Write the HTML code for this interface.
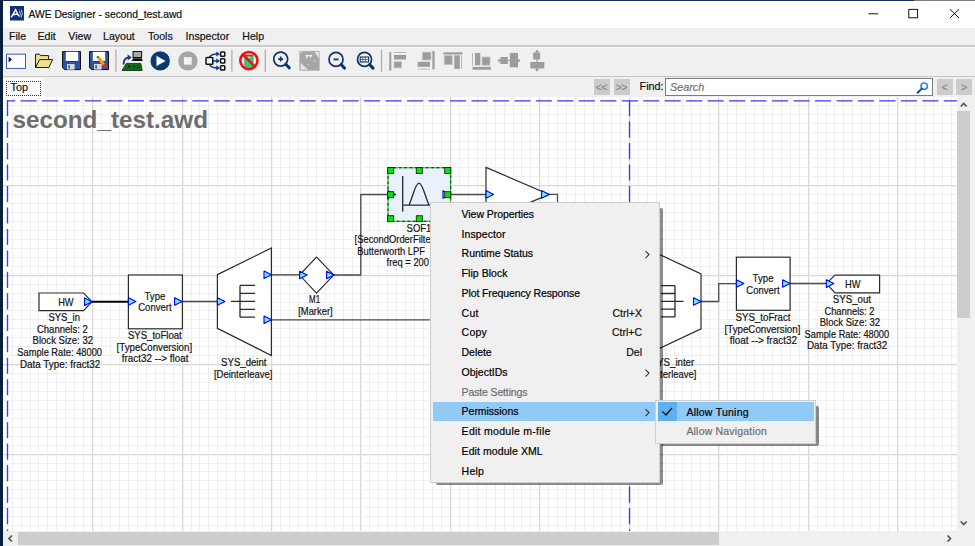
<!DOCTYPE html>
<html><head><meta charset="utf-8">
<style>
*{margin:0;padding:0;box-sizing:border-box}
html,body{width:975px;height:546px;overflow:hidden;background:#f0f0f0;font-family:"Liberation Sans", sans-serif;color:#000}
.abs{position:absolute}
.t{position:absolute;white-space:nowrap;line-height:1;-webkit-text-stroke:0.2px currentColor}
svg{position:absolute;left:0;top:0}
</style></head><body>

<div class="abs" style="left:0;top:0;width:975px;height:28px;background:#fff"></div>
<div class="abs" style="left:0;top:0;width:914px;height:1px;background:#1a3050"></div>
<div class="abs" style="left:914px;top:0;width:61px;height:1px;background:#7a7a7a"></div>
<svg width="975" height="30" style="left:0;top:0">
<rect x="10" y="6" width="14" height="14.5" fill="#10307a"/>
<path d="M11.2 17.4L15.6 9.8L18.8 16.2M12.8 14.8L17.6 14" stroke="#fff" stroke-width="1.4" fill="none"/>
<path d="M19.4 10.6Q21.4 13.6 19.4 16.8M21 9.6Q23.6 13.4 21 17.6" stroke="#c9d3e8" stroke-width="0.9" fill="none"/>
<path d="M868.5 13.8H878" stroke="#111" stroke-width="1"/>
<rect x="908.8" y="9.4" width="8.8" height="8.4" fill="none" stroke="#111" stroke-width="1"/>
<path d="M950 9.3L959 17.9M959 9.3L950 17.9" stroke="#111" stroke-width="1"/>
</svg>
<div class="t" style="left:28.5px;top:9.8px;font-size:10.3px;color:#111">AWE Designer - second_test.awd</div>
<svg width="975" height="80" style="left:0;top:0">
<!-- new -->
<rect x="6.5" y="54.2" width="19" height="14.2" fill="#fff" stroke="#3a5ca6" stroke-width="1"/>
<path d="M8.6 56.6L12 59.6L8.6 62.6Z" fill="#111"/>
<!-- open -->
<path d="M35.5 67.5V54.2H39.6L40.6 55.6H48.6V59.6" fill="#efe08a" stroke="#1a1a1a" stroke-width="1"/>
<path d="M35.5 67.5L39.6 59.6H52.6L48.8 67.5Z" fill="#efe08a" stroke="#1a1a1a" stroke-width="1" stroke-linejoin="round"/>
<!-- save -->
<path d="M62.5 51.6H80.5V69.6H64.5L62.5 67.6Z" fill="#2b52a3" stroke="#111" stroke-width="1"/>
<rect x="65.8" y="51.8" width="12.4" height="9.5" fill="#fff"/><rect x="65.8" y="61.1" width="12.4" height="0.9" fill="#14306a"/>
<rect x="67" y="64" width="7.6" height="5.6" fill="#d8d8d8"/>
<rect x="68.3" y="65.2" width="1.6" height="3.2" fill="#2b52a3"/>
<!-- save as -->
<path d="M89.5 51.6H108.5V69.6H91.5L89.5 67.6Z" fill="#2b52a3" stroke="#111" stroke-width="1"/>
<rect x="92.8" y="51.8" width="12.4" height="9.5" fill="#fff"/><rect x="92.8" y="61.1" width="12.4" height="0.9" fill="#14306a"/>
<rect x="94" y="64" width="7.6" height="5.6" fill="#d8d8d8"/>
<rect x="95.3" y="65.2" width="1.6" height="3.2" fill="#2b52a3"/>
<path d="M97.6 56.8L104.6 65.6" stroke="#f0a020" stroke-width="3.2"/>
<path d="M103.6 64.4L106.2 67.6" stroke="#e02828" stroke-width="3.2"/>
<path d="M97.2 56.3L98.2 57.6" stroke="#555" stroke-width="2"/>
<!-- sep -->
<rect x="115.3" y="49.8" width="1.2" height="22" fill="#a8a8a8"/>
<!-- download -->
<rect x="133" y="51.5" width="8.6" height="6" fill="#a8a8a8" stroke="#111" stroke-width="1"/>
<path d="M131.8 61H142.8L141.6 58.3H133Z" fill="#111"/>
<path d="M123.6 64.6C123.6 60.2 125.6 57.6 128.6 57.4" stroke="#143a8c" stroke-width="1.9" fill="none"/>
<path d="M127.6 54.2L131.6 57.4L127.6 60.6Z" fill="#143a8c"/>
<path d="M122 70.5L126.3 63.4H140.8L142.2 70.5Z" fill="#0e6c14" stroke="#062a08" stroke-width="0.8"/>
<circle cx="129" cy="66.4" r="0.8" fill="#000"/><circle cx="134" cy="66.4" r="0.7" fill="#000"/><circle cx="137.8" cy="67.4" r="0.7" fill="#000"/>
<!-- play -->
<circle cx="160.2" cy="60.9" r="9.7" fill="#0b3a6e"/>
<path d="M156.2 55.4L166 61L156.2 66.4Z" fill="#fff" stroke="#0b3a6e" stroke-width="0.5"/>
<!-- stop -->
<circle cx="187.9" cy="60.9" r="9.7" fill="#a6a6a6"/>
<rect x="183.9" y="57.1" width="7.8" height="7.6" fill="#f4f4f4"/>
<!-- flow -->
<path d="M209.2 57.4C210.8 54.6 213.6 53.9 217.6 54M213 60.9H217.6M209.2 64.3C210.8 67.2 213.6 67.9 217.6 67.9" stroke="#173a8a" stroke-width="1.5" fill="none"/>
<path d="M216.3 51.4L220 54L216.3 56.6ZM216.3 58.3L220 60.9L216.3 63.5ZM216.3 65.3L220 67.9L216.3 70.5Z" fill="#173a8a"/>
<rect x="206" y="57.4" width="6.8" height="6.8" rx="0.8" fill="#fff" stroke="#111" stroke-width="1.5"/>
<rect x="220.6" y="52" width="4.2" height="4.2" rx="0.8" fill="#fff" stroke="#111" stroke-width="1.5"/>
<rect x="220.6" y="58.8" width="4.2" height="4.2" rx="0.8" fill="#fff" stroke="#111" stroke-width="1.5"/>
<rect x="220.6" y="65.8" width="4.2" height="4.2" rx="0.8" fill="#fff" stroke="#111" stroke-width="1.5"/>
<rect x="231.3" y="49.8" width="1.2" height="22" fill="#a8a8a8"/>
<!-- no entry -->
<rect x="244.9" y="55" width="7.8" height="13" fill="#30d070"/>
<rect x="244.4" y="54.6" width="1.2" height="13.6" fill="#7a7a8a"/>
<rect x="252.3" y="54.6" width="1.2" height="13.6" fill="#7a7a8a"/>
<rect x="245.5" y="54.6" width="6.8" height="1.6" fill="#e02020"/>
<rect x="247.6" y="56.8" width="2.6" height="1.2" fill="#e8e020"/>
<circle cx="248.9" cy="60.6" r="8.6" fill="none" stroke="#ee1111" stroke-width="2.6"/>
<path d="M242.9 54.6L254.9 66.6" stroke="#ee1111" stroke-width="2.4"/>
<rect x="264.7" y="49.8" width="1.2" height="22" fill="#a8a8a8"/>
<!-- zoom in -->
<g stroke="#0d3466" fill="none">
<circle cx="280.7" cy="59.1" r="7" stroke-width="1.7"/>
<path d="M285.8 64.2L289.2 67.8" stroke-width="3" stroke-linecap="round"/>
<path d="M278.2 59.1H283.2M280.7 56.6V61.6" stroke-width="1.6"/>
<circle cx="336" cy="59.4" r="7" stroke-width="1.7"/>
<path d="M341.1 64.5L344.5 68.1" stroke-width="3" stroke-linecap="round"/>
<path d="M333.5 59.4H338.5" stroke-width="1.8"/>
<circle cx="364.5" cy="59.4" r="7" stroke-width="1.7"/>
<path d="M369.6 64.5L373 68.1" stroke-width="3" stroke-linecap="round"/>
<rect x="360.2" y="57" width="8.4" height="5" stroke-width="1.1"/>
<path d="M362.8 57.5V61.5M365.5 57.5V61.5M360.5 59.5H368" stroke-width="0.6"/>
</g>
<!-- zoom fit gray -->
<rect x="299.8" y="51.3" width="19.4" height="19" fill="#a6a6a6" stroke="#b0b0b0" stroke-width="0.8"/>
<path d="M300.6 62.8V69.8H308Z" fill="#e4e4e4"/>
<path d="M314.6 51.9H318.9V58.6Z" fill="#e4e4e4"/>
<path d="M300.4 51.6h2.2l-2.2 2.2z" fill="#dcdcdc"/>
<path d="M305.4 55.6H312.2M306.9 55.6V58.2M310.6 55.6V57.4" stroke="#f2f2f2" stroke-width="1.3"/>
<circle cx="314.6" cy="61" r="0.7" fill="#e8e8e8"/><circle cx="308" cy="64.6" r="0.7" fill="#e8e8e8"/>
<rect x="380.9" y="49.8" width="1.2" height="22" fill="#a8a8a8"/>
<!-- align left -->
<rect x="389.3" y="52.2" width="2" height="18.4" fill="#9c9c9c"/>
<rect x="394" y="52" width="12" height="1" fill="#b8b8b8"/>
<rect x="394" y="55" width="12" height="4.5" fill="#9c9c9c"/>
<rect x="394" y="61.8" width="7.4" height="6.1" fill="#9c9c9c" stroke="#c2c2c2" stroke-width="0.8"/>
<!-- align right -->
<rect x="432.4" y="51" width="2.2" height="18.5" fill="#9c9c9c"/>
<rect x="422.3" y="52.2" width="8.6" height="7.8" fill="#9c9c9c" stroke="#c2c2c2" stroke-width="0.8"/>
<rect x="417.7" y="61.8" width="12.3" height="5" fill="#9c9c9c"/>
<rect x="417.7" y="68.6" width="12.3" height="0.9" fill="#b8b8b8"/>
<!-- align top -->
<rect x="443.5" y="52.3" width="18.8" height="2.2" fill="#9c9c9c"/>
<rect x="444.2" y="55.6" width="8" height="9" fill="#9c9c9c" stroke="#c2c2c2" stroke-width="0.8"/>
<rect x="454.3" y="55.4" width="5.5" height="13.5" fill="#9c9c9c"/>
<rect x="461" y="55.4" width="1" height="13.5" fill="#b8b8b8"/>
<!-- align bottom -->
<rect x="472" y="52.9" width="1" height="13" fill="#b8b8b8"/>
<rect x="475" y="52.9" width="5.3" height="12.3" fill="#9c9c9c"/>
<rect x="482" y="57" width="8" height="8.2" fill="#9c9c9c" stroke="#c2c2c2" stroke-width="0.8"/>
<rect x="472.5" y="66.9" width="18.5" height="2.8" fill="#9c9c9c"/>
<!-- distribute h -->
<path d="M498 60.6H520" stroke="#9c9c9c" stroke-width="1.2"/>
<path d="M497.5 60.6L499.8 58.4V62.8ZM520.5 60.6L518.2 58.4V62.8Z" fill="#9c9c9c"/>
<rect x="500.4" y="57" width="7.4" height="7" fill="#9c9c9c"/>
<rect x="509.8" y="52.9" width="8.2" height="14.4" fill="#9c9c9c"/>
<!-- distribute v -->
<path d="M537 50.2V71" stroke="#9c9c9c" stroke-width="1.2"/>
<path d="M537 49.8L534.8 52.2H539.2ZM537 71.4L534.8 69H539.2Z" fill="#9c9c9c"/>
<rect x="533.2" y="52.5" width="7" height="7" fill="#9c9c9c"/>
<rect x="530.3" y="62" width="14" height="6.5" fill="#9c9c9c"/>
</svg>
<div class="t" style="left:9px;top:31px;font-size:10.6px;color:#111">File</div>
<div class="t" style="left:37.5px;top:31px;font-size:10.6px;color:#111">Edit</div>
<div class="t" style="left:68.3px;top:31px;font-size:10.6px;color:#111">View</div>
<div class="t" style="left:103px;top:31px;font-size:10.6px;color:#111">Layout</div>
<div class="t" style="left:148px;top:31px;font-size:10.6px;color:#111">Tools</div>
<div class="t" style="left:185.6px;top:31px;font-size:10.6px;color:#111">Inspector</div>
<div class="t" style="left:242.3px;top:31px;font-size:10.6px;color:#111">Help</div>
<div class="abs" style="left:3px;top:45px;width:972px;height:2px;background:#cbcbcb"></div>
<div class="abs" style="left:3px;top:47px;width:972px;height:1px;background:#f8f8f8"></div>
<div class="abs" style="left:3px;top:75.6px;width:972px;height:1.4px;background:#c6c6c6"></div>
<div class="abs" style="left:3px;top:78px;width:40px;height:19px;background:#fcfcfc"></div>
<div class="abs" style="left:5.5px;top:80.5px;width:35.5px;height:15px;border:1px dotted #333"></div>
<div class="t" style="left:10.5px;top:82px;font-size:10.8px;color:#111">Top</div>
<div class="abs" style="left:594px;top:79px;width:16px;height:16px;background:#cccccc"></div>
<div class="abs" style="left:614px;top:79px;width:16px;height:16px;background:#cccccc"></div>
<div class="t" style="left:595.5px;top:81.5px;font-size:10.5px;color:#8a8a8a;letter-spacing:-0.5px">&lt;&lt;</div>
<div class="t" style="left:615.5px;top:81.5px;font-size:10.5px;color:#8a8a8a;letter-spacing:-0.5px">&gt;&gt;</div>
<div class="t" style="left:639.6px;top:81px;font-size:10.8px;color:#111">Find:</div>
<div class="abs" style="left:664.5px;top:78.3px;width:268px;height:17.4px;background:#fff;border:1px solid #7a7a7a"></div>
<div class="t" style="left:670px;top:81.5px;font-size:10.8px;font-style:italic;color:#727272">Search</div>
<svg width="975" height="100" style="left:0;top:0">
<circle cx="924.2" cy="86.2" r="3.2" fill="none" stroke="#2d8ad0" stroke-width="1.6"/>
<path d="M921.8 88.6L917.6 92.8" stroke="#1a4a8a" stroke-width="2" stroke-linecap="round"/>
</svg>
<div class="abs" style="left:936.5px;top:79px;width:16px;height:15.5px;background:#cccccc"></div>
<div class="abs" style="left:956px;top:79px;width:16px;height:15.5px;background:#cccccc"></div>
<div class="t" style="left:941.5px;top:81.5px;font-size:10.5px;color:#8a8a8a">&lt;</div>
<div class="t" style="left:961px;top:81.5px;font-size:10.5px;color:#8a8a8a">&gt;</div>
<div class="abs" style="left:3px;top:97px;width:954px;height:434px;background:#fff"></div>
<svg width="975" height="546" style="font-family:"Liberation Sans", sans-serif;" fill="#111"><defs><clipPath id="cv"><rect x="3" y="97" width="954" height="434"/></clipPath></defs><g clip-path="url(#cv)">
<path d="M12 97h1v434h-1zM21 97h1v434h-1zM30 97h1v434h-1zM38 97h1v434h-1zM47 97h1v434h-1zM56 97h1v434h-1zM65 97h1v434h-1zM74 97h1v434h-1zM83 97h1v434h-1zM101 97h1v434h-1zM110 97h1v434h-1zM119 97h1v434h-1zM128 97h1v434h-1zM137 97h1v434h-1zM146 97h1v434h-1zM155 97h1v434h-1zM164 97h1v434h-1zM173 97h1v434h-1zM191 97h1v434h-1zM199 97h1v434h-1zM208 97h1v434h-1zM217 97h1v434h-1zM226 97h1v434h-1zM235 97h1v434h-1zM244 97h1v434h-1zM253 97h1v434h-1zM262 97h1v434h-1zM280 97h1v434h-1zM289 97h1v434h-1zM298 97h1v434h-1zM307 97h1v434h-1zM316 97h1v434h-1zM325 97h1v434h-1zM334 97h1v434h-1zM343 97h1v434h-1zM352 97h1v434h-1zM369 97h1v434h-1zM378 97h1v434h-1zM387 97h1v434h-1zM396 97h1v434h-1zM405 97h1v434h-1zM414 97h1v434h-1zM423 97h1v434h-1zM432 97h1v434h-1zM441 97h1v434h-1zM459 97h1v434h-1zM468 97h1v434h-1zM477 97h1v434h-1zM486 97h1v434h-1zM495 97h1v434h-1zM504 97h1v434h-1zM513 97h1v434h-1zM521 97h1v434h-1zM530 97h1v434h-1zM548 97h1v434h-1zM557 97h1v434h-1zM566 97h1v434h-1zM575 97h1v434h-1zM584 97h1v434h-1zM593 97h1v434h-1zM602 97h1v434h-1zM611 97h1v434h-1zM620 97h1v434h-1zM638 97h1v434h-1zM647 97h1v434h-1zM656 97h1v434h-1zM665 97h1v434h-1zM674 97h1v434h-1zM682 97h1v434h-1zM691 97h1v434h-1zM700 97h1v434h-1zM709 97h1v434h-1zM727 97h1v434h-1zM736 97h1v434h-1zM745 97h1v434h-1zM754 97h1v434h-1zM763 97h1v434h-1zM772 97h1v434h-1zM781 97h1v434h-1zM790 97h1v434h-1zM799 97h1v434h-1zM817 97h1v434h-1zM826 97h1v434h-1zM834 97h1v434h-1zM843 97h1v434h-1zM852 97h1v434h-1zM861 97h1v434h-1zM870 97h1v434h-1zM879 97h1v434h-1zM888 97h1v434h-1zM906 97h1v434h-1zM915 97h1v434h-1zM924 97h1v434h-1zM933 97h1v434h-1zM942 97h1v434h-1zM951 97h1v434h-1zM3 105h954v1h-954zM3 114h954v1h-954zM3 123h954v1h-954zM3 132h954v1h-954zM3 141h954v1h-954zM3 149h954v1h-954zM3 158h954v1h-954zM3 167h954v1h-954zM3 176h954v1h-954zM3 194h954v1h-954zM3 203h954v1h-954zM3 212h954v1h-954zM3 221h954v1h-954zM3 230h954v1h-954zM3 239h954v1h-954zM3 248h954v1h-954zM3 257h954v1h-954zM3 266h954v1h-954zM3 284h954v1h-954zM3 293h954v1h-954zM3 302h954v1h-954zM3 310h954v1h-954zM3 319h954v1h-954zM3 328h954v1h-954zM3 337h954v1h-954zM3 346h954v1h-954zM3 355h954v1h-954zM3 373h954v1h-954zM3 382h954v1h-954zM3 391h954v1h-954zM3 400h954v1h-954zM3 409h954v1h-954zM3 418h954v1h-954zM3 427h954v1h-954zM3 436h954v1h-954zM3 445h954v1h-954zM3 463h954v1h-954zM3 471h954v1h-954zM3 480h954v1h-954zM3 489h954v1h-954zM3 498h954v1h-954zM3 507h954v1h-954zM3 516h954v1h-954zM3 525h954v1h-954z" fill="#efefef"/>
<path d="M93 97h1v434h-1zM183 97h1v434h-1zM272 97h1v434h-1zM361 97h1v434h-1zM451 97h1v434h-1zM540 97h1v434h-1zM630 97h1v434h-1zM719 97h1v434h-1zM809 97h1v434h-1zM898 97h1v434h-1zM3 186h954v1h-954zM3 276h954v1h-954zM3 365h954v1h-954zM3 455h954v1h-954z" fill="#f3f3f3"/>
<path d="M92 97h1v434h-1zM182 97h1v434h-1zM271 97h1v434h-1zM360 97h1v434h-1zM450 97h1v434h-1zM539 97h1v434h-1zM629 97h1v434h-1zM718 97h1v434h-1zM808 97h1v434h-1zM897 97h1v434h-1zM3 185h954v1h-954zM3 275h954v1h-954zM3 364h954v1h-954zM3 454h954v1h-954z" fill="#d9d9d9"/>
<path d="M7.5 100.8H957" stroke="#3838ff" stroke-width="1.35" stroke-dasharray="16.1 5.37" fill="none" stroke-dashoffset="8.4"/>
<path d="M7.5 100.1V531" stroke="#3838ff" stroke-width="1.35" stroke-dasharray="16.1 5.37" fill="none"/>
<path d="M629.5 100.1V531" stroke="#3838ff" stroke-width="1.35" stroke-dasharray="16.1 5.37" fill="none"/>
<text x="12.5" y="128" font-size="24.5" font-weight="bold" fill="#6d6d6d" textLength="195.5" lengthAdjust="spacingAndGlyphs">second_test.awd</text>
<path d="M92 301.7H128.4" stroke="#000" stroke-width="2" fill="none"/>
<g stroke="#4a4a4a" stroke-width="1.3" fill="none"><path d="M182.4 301.5H217.4"/><path d="M271.4 274.8H299.6"/><path d="M334 275H360.8V194.5H388"/><path d="M450.6 194.5H486"/><path d="M549 194.4H557.5V274H647"/><path d="M271.4 319.8H647"/><path d="M701 301.5H718.7V283.6H736.4"/><path d="M790.1 283.5H826.3"/></g>
<path d="M39 293H83.5L92 301.7L83.5 310.6H39Z" fill="#fff" stroke="#2a2a2a" stroke-width="1.2"/>
<text x="58.2" y="305.8" font-size="10.2" text-anchor="start" stroke="#111" stroke-width="0.18" textLength="15.4" lengthAdjust="spacingAndGlyphs">HW</text>
<path d="M84.6 297.9L92.1 301.7L84.6 305.5Z" fill="#6ff0dc" stroke="#0000ff" stroke-width="1.1" stroke-linejoin="round"/>
<text x="48.4" y="321.3" font-size="10.2" text-anchor="start" stroke="#111" stroke-width="0.18" textLength="31.6" lengthAdjust="spacingAndGlyphs">SYS_in</text>
<text x="36.9" y="332.6" font-size="10.2" text-anchor="start" stroke="#111" stroke-width="0.18" textLength="51" lengthAdjust="spacingAndGlyphs">Channels: 2</text>
<text x="32.6" y="344.4" font-size="10.2" text-anchor="start" stroke="#111" stroke-width="0.18" textLength="60.4" lengthAdjust="spacingAndGlyphs">Block Size: 32</text>
<text x="17.3" y="355.7" font-size="10.2" text-anchor="start" stroke="#111" stroke-width="0.18" textLength="84.7" lengthAdjust="spacingAndGlyphs">Sample Rate: 48000</text>
<text x="19.9" y="367.6" font-size="10.2" text-anchor="start" stroke="#111" stroke-width="0.18" textLength="80.4" lengthAdjust="spacingAndGlyphs">Data Type: fract32</text>
<rect x="128.4" y="275" width="54" height="53.8" fill="#fff" stroke="#2a2a2a" stroke-width="1.2"/>
<text x="144.5" y="299.7" font-size="10.2" text-anchor="start" stroke="#111" stroke-width="0.18" textLength="20.9" lengthAdjust="spacingAndGlyphs">Type</text>
<text x="138.2" y="311.4" font-size="10.2" text-anchor="start" stroke="#111" stroke-width="0.18" textLength="33.4" lengthAdjust="spacingAndGlyphs">Convert</text>
<path d="M128.4 297.7L135.9 301.5L128.4 305.3Z" fill="#6ff0dc" stroke="#0000ff" stroke-width="1.1" stroke-linejoin="round"/>
<path d="M174.6 297.7L182.1 301.5L174.6 305.3Z" fill="#6ff0dc" stroke="#0000ff" stroke-width="1.1" stroke-linejoin="round"/>
<text x="127.9" y="339.3" font-size="10.2" text-anchor="start" stroke="#111" stroke-width="0.18" textLength="53.9" lengthAdjust="spacingAndGlyphs">SYS_toFloat</text>
<text x="116.6" y="351" font-size="10.2" text-anchor="start" stroke="#111" stroke-width="0.18" textLength="75.5" lengthAdjust="spacingAndGlyphs">[TypeConversion]</text>
<text x="121.7" y="362" font-size="10.2" text-anchor="start" stroke="#111" stroke-width="0.18" textLength="66.7" lengthAdjust="spacingAndGlyphs">fract32 --&gt; float</text>
<path d="M217.4 274.6L271.4 248V355.5L217.4 328.3Z" fill="#fff" stroke="#2a2a2a" stroke-width="1.2"/>
<path d="M231 301.4H240M240 285.4V317.2M240 285.4H255M240 293.3H255M240 301.4H255M240 309.3H255M240 317.2H255" stroke="#2a2a2a" stroke-width="1.3" fill="none"/>
<path d="M217.4 297.7L224.9 301.5L217.4 305.3Z" fill="#6ff0dc" stroke="#0000ff" stroke-width="1.1" stroke-linejoin="round"/>
<path d="M264 271.0L271.5 274.8L264 278.6Z" fill="#6ff0dc" stroke="#0000ff" stroke-width="1.1" stroke-linejoin="round"/>
<path d="M264 316.0L271.5 319.8L264 323.6Z" fill="#6ff0dc" stroke="#0000ff" stroke-width="1.1" stroke-linejoin="round"/>
<text x="221.1" y="365.8" font-size="10.2" text-anchor="start" stroke="#111" stroke-width="0.18" textLength="45.4" lengthAdjust="spacingAndGlyphs">SYS_deint</text>
<text x="213.9" y="378" font-size="10.2" text-anchor="start" stroke="#111" stroke-width="0.18" textLength="58.6" lengthAdjust="spacingAndGlyphs">[Deinterleave]</text>
<path d="M299.6 275L316.5 257L333.8 275L316.5 293.2Z" fill="#fff" stroke="#2a2a2a" stroke-width="1.1"/>
<path d="M299.6 271.2L307.1 275L299.6 278.8Z" fill="#6ff0dc" stroke="#0000ff" stroke-width="1.1" stroke-linejoin="round"/>
<path d="M326.6 271.2L334.1 275L326.6 278.8Z" fill="#6ff0dc" stroke="#0000ff" stroke-width="1.1" stroke-linejoin="round"/>
<text x="309" y="303.2" font-size="10.2" text-anchor="start" stroke="#111" stroke-width="0.18" textLength="11.1" lengthAdjust="spacingAndGlyphs">M1</text>
<text x="298.2" y="314.9" font-size="10.2" text-anchor="start" stroke="#111" stroke-width="0.18" textLength="34.5" lengthAdjust="spacingAndGlyphs">[Marker]</text>
<rect x="388" y="167.7" width="62.6" height="53.6" fill="#e9f2fc"/>
<rect x="388" y="167.7" width="62.6" height="53.6" fill="none" stroke="#10e010" stroke-width="1.2"/>
<rect x="388" y="167.7" width="62.6" height="53.6" fill="none" stroke="#333" stroke-width="1.2" stroke-dasharray="2.7 2.7"/>
<path d="M402.7 176V211.8M402.7 205.2H450M409 205.2C413 196 415.5 183.2 419 183.2C422.5 183.2 425 196 429 205.2" stroke="#2a2a2a" stroke-width="1.3" fill="none"/>
<path d="M388 190.7L395.5 194.5L388 198.3Z" fill="#6ff0dc" stroke="#0000ff" stroke-width="1.1" stroke-linejoin="round"/>
<path d="M443 190.7L450.5 194.5L443 198.3Z" fill="#6ff0dc" stroke="#0000ff" stroke-width="1.1" stroke-linejoin="round"/>
<rect x="387.7" y="167.5" width="6" height="6" fill="#00e600" stroke="#222" stroke-width="0.9"/>
<rect x="387.7" y="215.7" width="6" height="6" fill="#00e600" stroke="#222" stroke-width="0.9"/>
<rect x="416.3" y="167.5" width="6" height="6" fill="#00e600" stroke="#222" stroke-width="0.9"/>
<rect x="416.3" y="215.7" width="6" height="6" fill="#00e600" stroke="#222" stroke-width="0.9"/>
<rect x="444.7" y="167.5" width="6" height="6" fill="#00e600" stroke="#222" stroke-width="0.9"/>
<rect x="444.7" y="215.7" width="6" height="6" fill="#00e600" stroke="#222" stroke-width="0.9"/>
<rect x="387.7" y="191.7" width="6" height="6" fill="#00e600" stroke="#222" stroke-width="0.9"/>
<rect x="444.7" y="191.7" width="6" height="6" fill="#00e600" stroke="#222" stroke-width="0.9"/>
<text x="406.6" y="231.7" font-size="10.2" text-anchor="start" stroke="#111" stroke-width="0.18" textLength="24.8" lengthAdjust="spacingAndGlyphs">SOF1</text>
<text x="354.6" y="243.4" font-size="10.2" text-anchor="start" stroke="#111" stroke-width="0.18" textLength="124.5" lengthAdjust="spacingAndGlyphs">[SecondOrderFilterSmoothed]</text>
<text x="357.3" y="254.6" font-size="10.2" text-anchor="start" stroke="#111" stroke-width="0.18" textLength="67.7" lengthAdjust="spacingAndGlyphs">Butterworth LPF</text>
<text x="386.6" y="265.8" font-size="10.2" text-anchor="start" stroke="#111" stroke-width="0.18" textLength="56.5" lengthAdjust="spacingAndGlyphs">freq = 200 Hz</text>
<path d="M486 167.4L549 194.4L486 221.4Z" fill="#fff" stroke="#2a2a2a" stroke-width="1.2"/>
<path d="M486 190.6L493.5 194.4L486 198.20000000000002Z" fill="#6ff0dc" stroke="#0000ff" stroke-width="1.1" stroke-linejoin="round"/>
<path d="M541.6 190.6L549.1 194.4L541.6 198.20000000000002Z" fill="#6ff0dc" stroke="#0000ff" stroke-width="1.1" stroke-linejoin="round"/>
<path d="M647 248.6L701 274V328.9L647 354.4Z" fill="#fff" stroke="#2a2a2a" stroke-width="1.2"/>
<path d="M683.5 301.3H675M675 285.7V316.9M675 285.7H661M675 293.5H661M675 301.3H661M675 309.1H661M675 316.9H661" stroke="#2a2a2a" stroke-width="1.3" fill="none"/>
<path d="M693.5 297.7L701.0 301.5L693.5 305.3Z" fill="#6ff0dc" stroke="#0000ff" stroke-width="1.1" stroke-linejoin="round"/>
<text x="694.2" y="365.7" font-size="10.2" text-anchor="end" stroke="#111" stroke-width="0.18" textLength="43.5" lengthAdjust="spacingAndGlyphs">SYS_inter</text>
<text x="696.5" y="377.6" font-size="10.2" text-anchor="end" stroke="#111" stroke-width="0.18" textLength="47" lengthAdjust="spacingAndGlyphs">[Interleave]</text>
<rect x="736.4" y="257.2" width="53.7" height="53.1" fill="#fff" stroke="#2a2a2a" stroke-width="1.2"/>
<text x="752.6" y="281.9" font-size="10.2" text-anchor="start" stroke="#111" stroke-width="0.18" textLength="20.9" lengthAdjust="spacingAndGlyphs">Type</text>
<text x="746.3" y="293.6" font-size="10.2" text-anchor="start" stroke="#111" stroke-width="0.18" textLength="33.4" lengthAdjust="spacingAndGlyphs">Convert</text>
<path d="M736.4 279.7L743.9 283.5L736.4 287.3Z" fill="#6ff0dc" stroke="#0000ff" stroke-width="1.1" stroke-linejoin="round"/>
<path d="M782.6 279.7L790.1 283.5L782.6 287.3Z" fill="#6ff0dc" stroke="#0000ff" stroke-width="1.1" stroke-linejoin="round"/>
<text x="735.5" y="321.3" font-size="10.2" text-anchor="start" stroke="#111" stroke-width="0.18" textLength="55" lengthAdjust="spacingAndGlyphs">SYS_toFract</text>
<text x="724.5" y="333" font-size="10.2" text-anchor="start" stroke="#111" stroke-width="0.18" textLength="75.9" lengthAdjust="spacingAndGlyphs">[TypeConversion]</text>
<text x="729.8" y="344.2" font-size="10.2" text-anchor="start" stroke="#111" stroke-width="0.18" textLength="67.2" lengthAdjust="spacingAndGlyphs">float --&gt; fract32</text>
<path d="M826.3 283.6L835 275.1H879.6V292.8H835Z" fill="#fff" stroke="#2a2a2a" stroke-width="1.2"/>
<text x="845.1" y="288.3" font-size="10.2" text-anchor="start" stroke="#111" stroke-width="0.18" textLength="15.4" lengthAdjust="spacingAndGlyphs">HW</text>
<path d="M826.3 279.8L833.8 283.6L826.3 287.40000000000003Z" fill="#6ff0dc" stroke="#0000ff" stroke-width="1.1" stroke-linejoin="round"/>
<text x="832.8" y="303.3" font-size="10.2" text-anchor="start" stroke="#111" stroke-width="0.18" textLength="38.2" lengthAdjust="spacingAndGlyphs">SYS_out</text>
<text x="824.4" y="314.6" font-size="10.2" text-anchor="start" stroke="#111" stroke-width="0.18" textLength="50" lengthAdjust="spacingAndGlyphs">Channels: 2</text>
<text x="819.7" y="326" font-size="10.2" text-anchor="start" stroke="#111" stroke-width="0.18" textLength="60.4" lengthAdjust="spacingAndGlyphs">Block Size: 32</text>
<text x="804.6" y="337.6" font-size="10.2" text-anchor="start" stroke="#111" stroke-width="0.18" textLength="84.6" lengthAdjust="spacingAndGlyphs">Sample Rate: 48000</text>
<text x="807" y="349.2" font-size="10.2" text-anchor="start" stroke="#111" stroke-width="0.18" textLength="80.3" lengthAdjust="spacingAndGlyphs">Data Type: fract32</text>
</g></svg>
<div class="abs" style="left:957px;top:97px;width:18px;height:449px;background:#f0f0f0"></div>
<div class="abs" style="left:957px;top:111px;width:13.3px;height:206.5px;background:#cdcdcd"></div>
<div class="abs" style="left:3px;top:531px;width:954px;height:15px;background:#f0f0f0"></div>
<div class="abs" style="left:18px;top:532px;width:701px;height:13px;background:#cdcdcd"></div>
<svg width="975" height="546">
<g stroke="#505050" stroke-width="1.6" fill="none">
<path d="M960.7 106.5L963.7 103.5L966.7 106.5"/>
<path d="M960.7 521.5L963.7 524.5L966.7 521.5"/>
<path d="M12 535.5L9 538.5L12 541.5"/>
<path d="M947.5 535.5L950.5 538.5L947.5 541.5"/>
</g></svg>
<div class="abs" style="left:0;top:0;width:2.5px;height:546px;background:#07203e"></div>
<div class="abs" style="left:436.3px;top:208.3px;width:226.3px;height:277.0px;background:rgba(0,0,0,0.45);filter:blur(0.6px);border-radius:2px"></div>
<div class="abs" style="left:430.3px;top:202.3px;width:229.8px;height:280.5px;background:#f0f0f0;border:1px solid #cfcfcf"></div>
<div class="abs" style="left:432.8px;top:401.8px;width:222px;height:19.6px;background:#91c9f7"></div>
<div class="t" style="left:461.6px;top:208.9px;font-size:10.5px;color:#000;letter-spacing:-0.06px">View Properties</div>
<div class="t" style="left:461.6px;top:228.7px;font-size:10.5px;color:#000;letter-spacing:0.09px">Inspector</div>
<div class="t" style="left:461.6px;top:248.4px;font-size:10.5px;color:#000;letter-spacing:-0.02px">Runtime Status</div>
<svg width="975" height="546"><path d="M645.5 251.1L649 254.6L645.5 258.1" stroke="#333" stroke-width="1.1" fill="none"/></svg>
<div class="t" style="left:461.6px;top:268.2px;font-size:10.5px;color:#000;letter-spacing:0.04px">Flip Block</div>
<div class="t" style="left:461.6px;top:287.9px;font-size:10.5px;color:#000;letter-spacing:-0.11px">Plot Frequency Response</div>
<div class="t" style="left:461.6px;top:307.7px;font-size:10.5px;color:#000;letter-spacing:0.25px">Cut</div>
<div class="t" style="right:333px;top:307.7px;font-size:10.5px;color:#111">Ctrl+X</div>
<div class="t" style="left:461.6px;top:327.4px;font-size:10.5px;color:#000;letter-spacing:0.20px">Copy</div>
<div class="t" style="right:333px;top:327.4px;font-size:10.5px;color:#111">Ctrl+C</div>
<div class="t" style="left:461.6px;top:347.2px;font-size:10.5px;color:#000;letter-spacing:-0.06px">Delete</div>
<div class="t" style="right:333px;top:347.2px;font-size:10.5px;color:#111">Del</div>
<div class="t" style="left:461.6px;top:366.9px;font-size:10.5px;color:#000;letter-spacing:-0.02px">ObjectIDs</div>
<svg width="975" height="546"><path d="M645.5 369.6L649 373.1L645.5 376.6" stroke="#333" stroke-width="1.1" fill="none"/></svg>
<div class="t" style="left:461.6px;top:386.7px;font-size:10.5px;color:#6d6d6d;letter-spacing:-0.14px">Paste Settings</div>
<div class="t" style="left:461.6px;top:406.4px;font-size:10.5px;color:#000;letter-spacing:-0.03px">Permissions</div>
<svg width="975" height="546"><path d="M645.5 409.1L649 412.6L645.5 416.1" stroke="#333" stroke-width="1.1" fill="none"/></svg>
<div class="t" style="left:461.6px;top:426.2px;font-size:10.5px;color:#000;letter-spacing:0.28px">Edit module m-file</div>
<div class="t" style="left:461.6px;top:445.9px;font-size:10.5px;color:#000;letter-spacing:0.08px">Edit module XML</div>
<div class="t" style="left:461.6px;top:465.7px;font-size:10.5px;color:#000;letter-spacing:0.22px">Help</div>
<div class="abs" style="left:661.2px;top:405.5px;width:157.8px;height:40.5px;background:rgba(0,0,0,0.45);filter:blur(0.6px);border-radius:2px"></div>
<div class="abs" style="left:655.2px;top:399.5px;width:161.3px;height:44px;background:#f0f0f0;border:1px solid #cfcfcf"></div>
<div class="abs" style="left:657.5px;top:402px;width:156.4px;height:19.2px;background:#91c9f7"></div>
<div class="abs" style="left:657.5px;top:402px;width:19.5px;height:19.2px;background:#5fb0f2"></div>
<svg width="975" height="546"><path d="M662.5 411.5L666 415L672 408" stroke="#111" stroke-width="1.3" fill="none"/></svg>
<div class="t" style="left:686.4px;top:406.6px;font-size:10.5px;color:#000;letter-spacing:0.24px">Allow Tuning</div>
<div class="t" style="left:686.4px;top:426.2px;font-size:10.5px;color:#6d6d6d;letter-spacing:0.19px">Allow Navigation</div>
</body></html>
